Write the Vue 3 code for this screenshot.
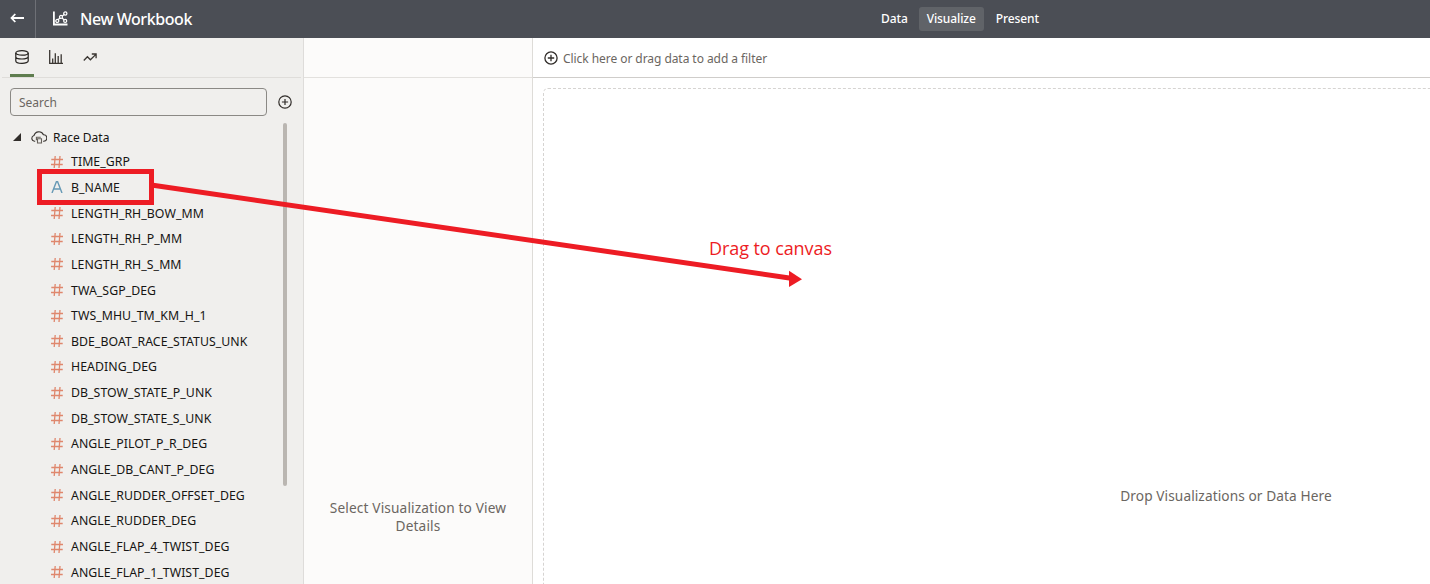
<script setup>
const fields = [
  { name: 'TIME_GRP' },
  { name: 'B_NAME', text: true },
  { name: 'LENGTH_RH_BOW_MM' },
  { name: 'LENGTH_RH_P_MM' },
  { name: 'LENGTH_RH_S_MM' },
  { name: 'TWA_SGP_DEG' },
  { name: 'TWS_MHU_TM_KM_H_1' },
  { name: 'BDE_BOAT_RACE_STATUS_UNK' },
  { name: 'HEADING_DEG' },
  { name: 'DB_STOW_STATE_P_UNK' },
  { name: 'DB_STOW_STATE_S_UNK' },
  { name: 'ANGLE_PILOT_P_R_DEG' },
  { name: 'ANGLE_DB_CANT_P_DEG' },
  { name: 'ANGLE_RUDDER_OFFSET_DEG' },
  { name: 'ANGLE_RUDDER_DEG' },
  { name: 'ANGLE_FLAP_4_TWIST_DEG' },
  { name: 'ANGLE_FLAP_1_TWIST_DEG' },
]
</script>

<template>
  <div class="app">
    <header class="header">
      <button class="back" aria-label="Back">
        <svg width="14" height="10" viewBox="0 0 14 10" fill="none" stroke="#fff" stroke-width="1.8"><path d="M1.5 5H14M5.3 1L1.5 5l3.8 4" /></svg>
      </button>
      <svg class="book" width="15" height="15" viewBox="0 0 15 15" fill="none" stroke="#fff">
        <path d="M.9 .6v12.9h13.6" stroke-width="1.8" />
        <path d="M5 8.8L7.2 6.8M9.3 5L11.2 3.5M9 7l2.3 2" stroke-width="1.2" />
        <circle cx="4.3" cy="9.9" r="1.5" stroke-width="1.3" /><circle cx="8" cy="5.9" r="1.5" stroke-width="1.3" /><circle cx="12.3" cy="2.5" r="1.6" stroke-width="1.3" /><circle cx="12.2" cy="9.9" r="1.5" stroke-width="1.3" />
      </svg>
      <h1 class="title">New Workbook</h1>
      <nav class="modes">
        <a class="mode data">Data</a>
        <a class="mode active">Visualize</a>
        <a class="mode">Present</a>
      </nav>
    </header>

    <main class="body">
      <aside class="panel">
        <div class="tabs">
          <span class="tab selected">
            <svg width="14" height="14" viewBox="0 0 14 14" fill="none" stroke="#25221f" stroke-width="1.2"><ellipse cx="7" cy="2.9" rx="6.2" ry="2.2" /><path d="M.8 2.9v8c0 1.3 2.8 2.4 6.2 2.4s6.2-1.1 6.2-2.4v-8M.8 6.7C.8 8 3.6 9 7 9s6.2-1 6.2-2.3" /></svg>
          </span>
          <span class="tab">
            <svg width="14" height="14" viewBox="0 0 14 14" fill="none" stroke="#3a3632" stroke-width="1.3"><path d="M.7 0v13.3H14M3.7 13V8.5M6.3 13V3.2M9.2 13V6M12.2 13V4.2" /></svg>
          </span>
          <span class="tab">
            <svg width="14" height="14" viewBox="0 0 14 14" fill="none" stroke="#3a3632" stroke-width="1.3"><path d="M.8 10.5L4.4 6.8l3 3 5.5-5.4M8.8 4h4.3v4.3" /></svg>
          </span>
        </div>
        <div class="search-row">
          <div class="search">Search</div>
          <svg width="14" height="14" viewBox="0 0 14 14" fill="none" stroke="#312d2a" stroke-width="1.2"><circle cx="7" cy="7" r="6.2" /><path d="M7 3.9v6.2M3.9 7h6.2" /></svg>
        </div>
        <div class="dataset">
          <svg class="caret" width="8" height="8" viewBox="0 0 8 8"><path d="M8 0v8H0z" fill="#312d2a" /></svg>
          <svg class="cloud" width="16" height="13" viewBox="0 0 16 13" fill="none" stroke="#3a3632">
            <path d="M4.2 10.2H3.5A2.9 2.9 0 0 1 3 4.5 5 5 0 0 1 12.4 3.8 3.2 3.2 0 0 1 12.8 10.2h-.7" stroke-width="1.1" />
            <path d="M5.4 9.2V6.2h4.4M6.5 7.8h4v4.2h-4z" stroke-width="1.1" stroke="#66615b" />
          </svg>
          <span>Race Data</span>
        </div>
        <ul class="fields">
          <li v-for="f in fields" :key="f.name" class="field">
            <svg v-if="f.text" width="12" height="12" viewBox="0 0 12 12" fill="none" stroke="#6699b5" stroke-width="1.4"><path d="M1 12L5.4.7h1.2L11 12M2.6 8h6.8" /></svg>
            <svg v-else width="12" height="12" viewBox="0 0 12 12" fill="none" stroke="#df876d" stroke-width="1.3"><path d="M4.2 0L3.2 12M9 0L8 12M.3 3.5H12M0 8.5h11.7" /></svg>
            <span>{{ f.name }}</span>
          </li>
        </ul>
        <div class="scroll-thumb"></div>
      </aside>

      <section class="details">
        <div class="details-top"></div>
        <p class="details-hint">Select Visualization to View<br>Details</p>
      </section>

      <section class="work">
        <div class="filter">
          <svg width="14" height="14" viewBox="0 0 14 14" fill="none" stroke="#312d2a" stroke-width="1.3"><circle cx="7" cy="7" r="6.1" /><path d="M7 3.8v6.4M3.8 7h6.4" /></svg>
          <span class="filter-text">Click here or drag data to add a filter</span>
        </div>
        <div class="canvas"><span>Drop Visualizations or Data Here</span></div>
      </section>
    </main>

    <svg class="marks" width="1430" height="584" viewBox="0 0 1430 584">
      <rect x="39.5" y="171.5" width="112" height="31" fill="none" stroke="#ed1c24" stroke-width="5" />
      <path d="M153 185.3L791 278.2" stroke="#ed1c24" stroke-width="5" />
      <path d="M789 270.8L802 279.3L789 287z" fill="#ed1c24" />
    </svg>
    <div class="drag-note">Drag to canvas</div>
  </div>
</template>

<style>
body { overflow: hidden; }
</style>

<style scoped>
* { box-sizing: border-box; }
svg { display: block; flex: none; }
.app { position: relative; width: 1430px; height: 584px; overflow: hidden; display: flex; flex-direction: column; font: 13.7px/18px "Noto Sans", "Open Sans", sans-serif; color: #161513; background: #fff; }
.header { height: 38px; flex: none; display: flex; align-items: center; background: #4b4e55; color: #fff; }
.back { width: 36px; height: 38px; padding: 0 0 2px 10px; border: 0; border-right: 1px solid #6e7076; background: none; display: flex; align-items: center; }
.book { margin: -2px 0 0 17px; }
.title { margin: 0 0 0 12px; width: 791px; font-size: 16px; line-height: 38px; font-weight: 500; letter-spacing: -.42px; white-space: nowrap; }
.modes { display: flex; align-items: center; height: 36px; }
.mode { height: 24px; padding: 0 8px; margin-left: 3px; font-size: 12px; line-height: 24px; font-weight: 500; letter-spacing: -.1px; border-radius: 3px; white-space: nowrap; }
.data { margin-left: 2px; }
.active { background: #606368; }
.mode:last-child { margin-left: 4px; }
.body { flex: 1; min-height: 0; display: flex; }
.panel { position: relative; width: 304px; flex: none; background: #f0efed; border-right: 1px solid #dedcda; overflow: hidden; }
.tabs { display: flex; gap: 10px; height: 40px; margin: 0 2px; padding-left: 8px; border-bottom: 1px solid #dfddda; }
.tab { width: 24px; height: 39px; padding: 12px 5px 0; }
.selected { border-bottom: 3px solid #5f7d4f; }
.search-row { display: flex; align-items: center; gap: 11px; margin: 10px 0 0 10px; }
.search { width: 257px; height: 28px; border: 1px solid #8b8985; border-radius: 4px; padding-left: 8px; line-height: 28px; font-size: 12px; color: #6b6661; }
.dataset { display: flex; align-items: center; height: 26px; margin-top: 8px; padding: 2px 0 0 13px; font-size: 12px; }
.caret { margin-top: -2px; }
.cloud { margin: -2px 6px 0 10px; }
.fields { list-style: none; margin: -.6px 0 0; padding: 0 0 0 51px; }
.field { height: 25.67px; display: flex; align-items: center; gap: 8px; font-size: 12.3px; letter-spacing: .06px; white-space: nowrap; }
.field svg { margin-top: -1px; }
.scroll-thumb { position: absolute; left: 283px; top: 85px; width: 4px; height: 363px; border-radius: 2px; background: #bab6b1; }
.details { width: 229px; flex: none; background: #fcfbfa; border-right: 1px solid #dedcd8; }
.details-top { height: 40px; border-bottom: 1px solid #e3e1de; }
.details-hint { margin: 421px 0 0; text-align: center; letter-spacing: .13px; color: #6b6661; }
.work { flex: 1; min-width: 0; overflow: hidden; }
.filter { height: 40px; border-bottom: 1px solid #cfcdca; display: flex; align-items: center; gap: 5px; padding-left: 11px; font-size: 12px; letter-spacing: -.06px; color: #6b6661; }
.filter-text { padding-top: 3px; }
.canvas { width: 1366px; height: 816px; margin: 10px 0 0 10px; border: 1px dashed #d6d4d2; border-radius: 5px; display: flex; align-items: center; justify-content: center; letter-spacing: .08px; color: #6b6661; }
.marks { position: absolute; left: 0; top: 0; }
.drag-note { position: absolute; left: 709px; top: 236px; font: 18px/24px "Open Sans", "Noto Sans", sans-serif; letter-spacing: -.08px; color: #ed1c24; white-space: nowrap; }
</style>
